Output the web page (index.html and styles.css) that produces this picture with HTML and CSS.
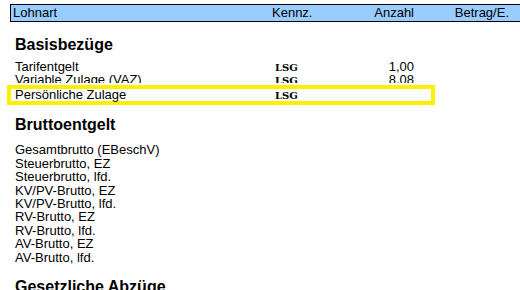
FILE: index.html
```html
<!DOCTYPE html>
<html lang="de">
<head>
    <meta charset="UTF-8">
    <meta name="viewport" content="width=device-width, initial-scale=1.0">
    <title>Lohnarten</title>
    <link rel="stylesheet" href="styles.css">
</head>
<body>
    <div class="head">
        <span>Lohnart</span>
        <span>Kennz.</span>
        <span class="num">Anzahl</span>
        <span class="num">Betrag/E.</span>
    </div>

    <section class="group">
        <h2>Basisbezüge</h2>
        <div class="row">
            <span>Tarifentgelt</span>
            <span class="code">LSG</span>
            <span class="qty">1,00</span>
        </div>
        <div class="row cut">
            <span>Variable Zulage (VAZ)</span>
            <span class="code">LSG</span>
            <span class="qty">8,08</span>
        </div>
        <div class="row marked">
            <span>Persönliche Zulage</span>
            <span class="code">LSG</span>
            <span class="qty"></span>
        </div>
    </section>

    <section class="group brutto">
        <h2>Bruttoentgelt</h2>
        <ul class="list">
            <li>Gesamtbrutto (EBeschV)</li>
            <li>Steuerbrutto, EZ</li>
            <li>Steuerbrutto, lfd.</li>
            <li>KV/PV-Brutto, EZ</li>
            <li>KV/PV-Brutto, lfd.</li>
            <li>RV-Brutto, EZ</li>
            <li>RV-Brutto, lfd.</li>
            <li>AV-Brutto, EZ</li>
            <li>AV-Brutto, lfd.</li>
        </ul>
    </section>

    <section class="group">
        <h2>Gesetzliche Abzüge</h2>
    </section>
</body>
</html>
```

FILE: styles.css
```css
body {
    font-family: 'Liberation Sans', Arial, sans-serif;
    margin: 0;
    padding: 0;
    background-color: #fff;
    color: #000;
    overflow: hidden;
}
.head {
    display: grid;
    grid-template-columns: 259px 60px 82px 95px;
    margin: 4px 0 0 10px;
    padding-left: 2px;
    height: 16px;
    line-height: 16px;
    font-size: 13px;
    background-color: #99ccff;
    border-top: 1px solid #000;
    border-bottom: 1px solid #000;
    border-left: 1px solid #000;
}
.num {
    text-align: right;
}
.group h2 {
    font-size: 16px;
    line-height: 19px;
    margin: 13px 0 6px 15px;
}
.brutto h2 {
    margin-top: 10px;
    margin-bottom: 9px;
}
.row {
    display: grid;
    grid-template-columns: 260px 60px 79px;
    margin-left: 15px;
    font-size: 13px;
    line-height: 13.4px;
    height: 13.4px;
    align-items: baseline;
}
.row .code {
    font-family: 'DejaVu Serif', 'Liberation Serif', serif;
    font-weight: bold;
    font-size: 10px;
}
.row .qty {
    text-align: right;
    margin-top: -2px;
}
.cut {
    height: 10px;
    overflow: hidden;
}
.marked {
    margin: 2px 0 0 7px;
    width: 416px;
    height: 12px;
    line-height: 12px;
    padding-left: 4px;
    border: 4px solid #fff000;
}
.list {
    list-style: none;
    margin: 0 0 13px 15px;
    padding: 0;
    font-size: 13px;
    line-height: 13.4px;
}
```
